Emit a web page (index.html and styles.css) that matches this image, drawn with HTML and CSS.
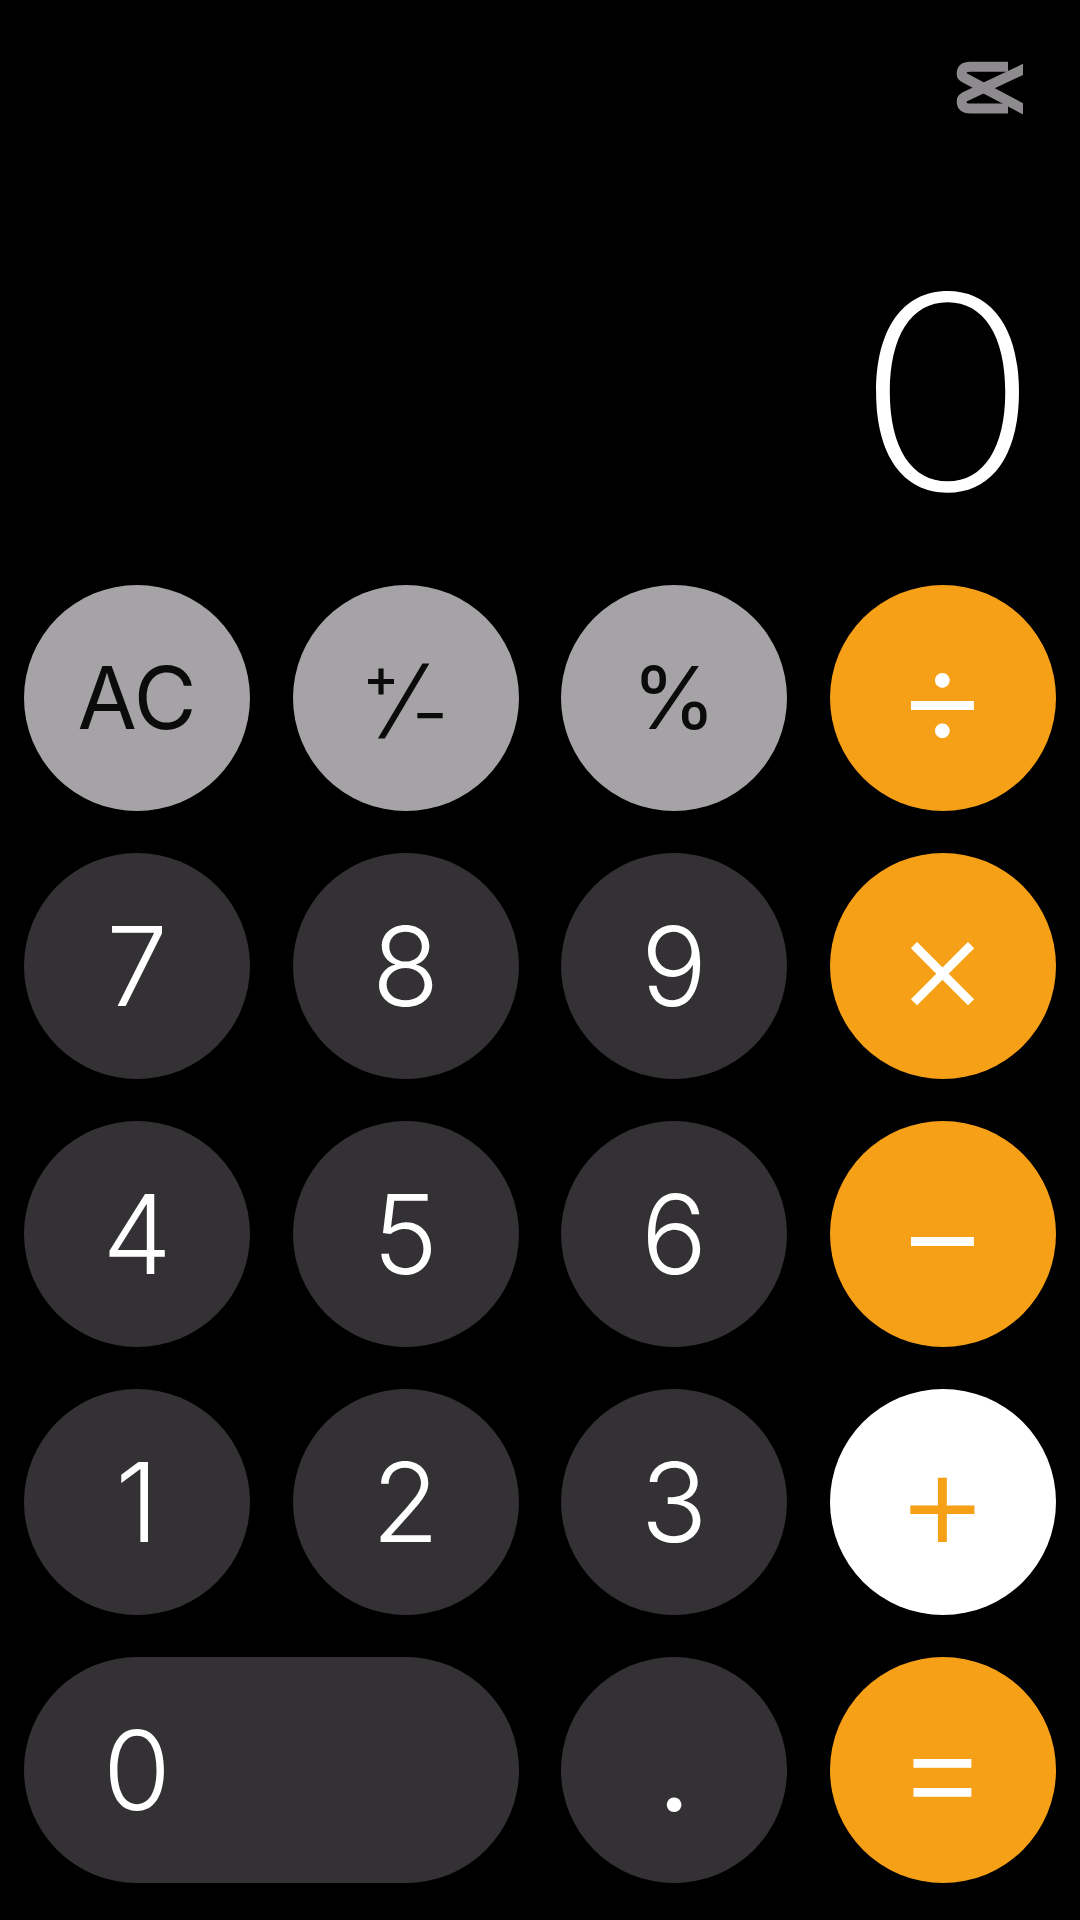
FILE: index.html
```html
<!DOCTYPE html>
<html>
<head>
    <title>Calculator</title>
    <link rel="stylesheet" href="styles.css">
</head>
<body>
    <svg class="watermark" viewBox="0 0 68 54" aria-hidden="true">
        <path d="M53 6.7H15Q6.7 6.7 6.7 13.5V14Q6.7 16.5 10 18L72 51"/>
        <path d="M53 48.5H15Q6.7 48.5 6.7 41.5V41Q6.7 38.5 10 36.8L72 7.5"/>
    </svg>

    <div class="calculator">
        <div class="display"><span class="display-value">0</span></div>

        <div class="keypad">
            <button class="key key-gray key-label">AC</button>
            <button class="key key-gray key-sign"><span class="sign-plus">+</span><span class="sign-slash">/</span><span class="sign-minus">−</span></button>
            <button class="key key-gray key-percent">%</button>
            <button class="key key-orange key-op">÷</button>

            <button class="key key-dark">7</button>
            <button class="key key-dark">8</button>
            <button class="key key-dark">9</button>
            <button class="key key-orange key-op">×</button>

            <button class="key key-dark">4</button>
            <button class="key key-dark">5</button>
            <button class="key key-dark">6</button>
            <button class="key key-orange key-op">−</button>

            <button class="key key-dark">1</button>
            <button class="key key-dark">2</button>
            <button class="key key-dark">3</button>
            <button class="key key-white key-op">+</button>

            <button class="key key-dark key-zero"><span class="zero-digit">0</span></button>
            <button class="key key-dark key-dot">.</button>
            <button class="key key-orange key-op">=</button>
        </div>
    </div>
</body>
</html>
```
FILE: styles.css
```css
html, body {
    height: 100%;
    margin: 0;
    background: #000;
}

body {
    position: relative;
    font-family: Inter, "Liberation Sans", sans-serif;
    font-weight: 300;
}

.watermark {
    position: absolute;
    top: 60px;
    left: 955px;
    width: 68px;
    height: 54px;
    fill: none;
    stroke: #8d8b8d;
    stroke-width: 10;
}

.calculator {
    display: flex;
    flex-direction: column;
    justify-content: flex-end;
    height: 100%;
    box-sizing: border-box;
    padding: 0 24px 37px;
}

.display {
    display: flex;
    justify-content: flex-end;
    padding-right: 27px;
    margin-bottom: 86px;
}

.display-value {
    color: #fff;
    font-size: 270px;
    font-weight: 200;
    line-height: 215px;
    transform: scaleX(1.13);
}

.keypad {
    display: grid;
    grid-template-columns: repeat(4, 226px);
    grid-auto-rows: 226px;
    column-gap: 42.5px;
    row-gap: 42px;
}

.key {
    display: flex;
    align-items: center;
    justify-content: center;
    padding: 0;
    border: 0;
    border-radius: 113px;
    font-family: inherit;
    font-weight: 300;
    font-size: 110px;
    line-height: 1;
}

.key-gray {
    background: #a5a3a6;
    color: #0b0b0b;
}

.key-dark {
    background: #333134;
    color: #fff;
}

.key-orange {
    background: #f6a017;
    color: #fff;
}

.key-white {
    background: #fff;
    color: #f6a017;
}

.key-label {
    font-size: 86px;
    font-weight: 400;
}

.key-percent {
    font-size: 86px;
    font-weight: 400;
}

.key-op {
    box-sizing: border-box;
    padding-bottom: 8px;
    font-size: 142px;
    font-weight: 300;
}

.key-zero {
    grid-column: span 2;
    justify-content: flex-start;
}

.zero-digit {
    width: 226px;
    text-align: center;
}

.key-dot {
    align-items: flex-end;
    padding-bottom: 57px;
    box-sizing: border-box;
    font-size: 110px;
    font-weight: 400;
}

.key-sign {
    font-size: 86px;
    font-weight: 400;
}

.sign-slash {
    display: inline-block;
    transform: skewX(-18deg);
}

.sign-plus {
    font-size: 54px;
    font-weight: 500;
    margin-right: -10px;
    margin-bottom: 40px;
}

.sign-minus {
    font-size: 54px;
    font-weight: 500;
    margin-left: -8px;
    margin-top: 28px;
}
```
